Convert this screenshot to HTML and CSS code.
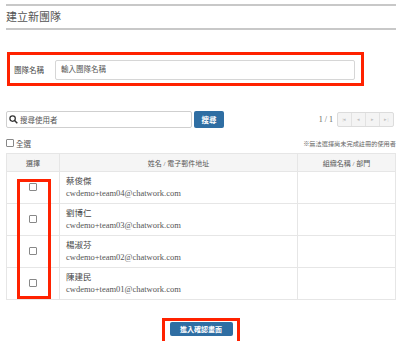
FILE: index.html
```html
<!DOCTYPE html>
<html lang="zh-Hant">
<head>
    <meta charset="UTF-8">
    <title>建立新團隊</title>
    <link rel="stylesheet" href="styles.css">
</head>
<body>
    <div class="page">
        <h1 class="title">建立新團隊</h1>

        <div class="team-box">
            <label class="team-label">團隊名稱</label>
            <div class="team-input">輸入團隊名稱</div>
        </div>

        <div class="search-row">
            <div class="search-input">
                <svg class="search-icon" width="9" height="9" viewBox="0 0 10 10">
                    <circle cx="4" cy="4" r="3" fill="none" stroke="#333" stroke-width="1.4"/>
                    <line x1="6.2" y1="6.2" x2="9.2" y2="9.2" stroke="#333" stroke-width="1.6"/>
                </svg>
                <span>搜尋使用者</span>
            </div>
            <button class="search-btn">搜尋</button>
            <div class="pager">
                <span class="pager-count">1 / 1</span>
                <div class="pager-btns">
                    <span class="pager-btn">|◂</span>
                    <span class="pager-btn">◂</span>
                    <span class="pager-btn">▸</span>
                    <span class="pager-btn">▸|</span>
                </div>
            </div>
        </div>

        <div class="select-row">
            <span class="check-all"><span class="box"></span>全選</span>
            <span class="note">※無法選擇尚未完成註冊的使用者</span>
        </div>

        <div class="table-wrap">
            <div class="pick-frame"></div>
            <table class="users">
                <thead>
                    <tr>
                        <th class="col-pick">選擇</th>
                        <th class="col-name">姓名 / 電子郵件地址</th>
                        <th class="col-org">組織名稱 / 部門</th>
                    </tr>
                </thead>
                <tbody>
                    <tr>
                        <td class="col-pick"><span class="box"></span></td>
                        <td class="col-name"><div class="name">蔡俊傑</div><div class="email">cwdemo+team04@chatwork.com</div></td>
                        <td></td>
                    </tr>
                    <tr>
                        <td class="col-pick"><span class="box"></span></td>
                        <td class="col-name"><div class="name">劉博仁</div><div class="email">cwdemo+team03@chatwork.com</div></td>
                        <td></td>
                    </tr>
                    <tr>
                        <td class="col-pick"><span class="box"></span></td>
                        <td class="col-name"><div class="name">楊淑芬</div><div class="email">cwdemo+team02@chatwork.com</div></td>
                        <td></td>
                    </tr>
                    <tr>
                        <td class="col-pick"><span class="box"></span></td>
                        <td class="col-name"><div class="name">陳建民</div><div class="email">cwdemo+team01@chatwork.com</div></td>
                        <td></td>
                    </tr>
                </tbody>
            </table>
        </div>

        <div class="actions">
            <div class="action-frame">
                <button class="confirm-btn">進入確認畫面</button>
            </div>
        </div>
    </div>
</body>
</html>
```

FILE: styles.css
```css
body {
    margin: 0;
    background: #ffffff;
    font-family: "Liberation Serif", "Noto Sans CJK TC", serif;
    color: #333;
}
.page {
    width: 390px;
    padding: 4px 0 0 6px;
}
.title {
    margin: 0;
    height: 22px;
    line-height: 22px;
    font-size: 11px;
    font-weight: normal;
    color: #555;
    border-top: 2px solid #c8c8c8;
    border-bottom: 2px solid #c8c8c8;
}
.team-box {
    margin: 22px 0 0 1px;
    width: 351px;
    height: 28px;
    border: 3px solid #ff2200;
    display: flex;
    align-items: center;
}
.team-label {
    width: 41px;
    padding-left: 4px;
    font-size: 7.5px;
    color: #444;
}
.team-input {
    width: 293px;
    height: 18px;
    margin-top: 2px;
    border: 1px solid #d6d6d6;
    border-radius: 2px;
    font-size: 7.5px;
    color: #555;
    line-height: 18px;
    padding-left: 5px;
}
.search-row {
    margin-top: 25px;
    display: flex;
    align-items: center;
    height: 17px;
}
.search-input {
    width: 182px;
    height: 15px;
    border: 1px solid #cfcfcf;
    border-radius: 2px;
    display: flex;
    align-items: center;
    gap: 2px;
    padding-left: 2px;
    font-size: 7.5px;
    color: #555;
}
.search-icon {
    display: block;
}
.search-btn {
    margin-left: 2px;
    width: 30px;
    height: 17px;
    padding: 0;
    border: none;
    border-radius: 2px;
    background: #2f6ea3;
    color: #fff;
    font-family: inherit;
    font-size: 7.5px;
    font-weight: bold;
}
.pager {
    margin-left: auto;
    display: flex;
    align-items: center;
    gap: 4px;
}
.pager-count {
    font-size: 8px;
    color: #666;
}
.pager-btns {
    display: flex;
    height: 13px;
    border: 1px solid #dcdcdc;
    border-radius: 2px;
    background: #f4f4f4;
    margin-right: 2px;
}
.pager-btn {
    width: 13px;
    font-size: 5px;
    color: #c0c0c0;
    text-align: center;
    line-height: 13px;
    border-left: 1px solid #e2e2e2;
}
.pager-btn:first-child {
    border-left: none;
}
.select-row {
    margin-top: 9px;
    display: flex;
    align-items: center;
    justify-content: space-between;
    height: 12px;
    font-size: 7.5px;
    color: #555;
}
.check-all {
    display: flex;
    align-items: center;
    gap: 2px;
}
.note {
    font-size: 6.2px;
    color: #666;
}
.box {
    display: inline-block;
    width: 6px;
    height: 6px;
    border: 1px solid #888;
    border-radius: 1px;
    background: #fff;
}
.table-wrap {
    position: relative;
    margin-top: 4px;
}
.users {
    width: 390px;
    table-layout: fixed;
    border-collapse: collapse;
    font-size: 7px;
}
.users th,
.users td {
    border: 1px solid #e6e6e6;
    padding: 0;
}
.users th {
    height: 17px;
    background: #f5f5f5;
    font-weight: normal;
    color: #555;
}
.users td {
    height: 31px;
}
.col-pick {
    width: 52px;
    text-align: center;
}
.col-name {
    width: 237px;
}
td.col-name {
    padding-left: 6px;
}
.name {
    font-size: 8.5px;
    color: #444;
    line-height: 11px;
}
.email {
    font-size: 8.5px;
    color: #555;
    line-height: 12px;
}
.pick-frame {
    position: absolute;
    left: 11px;
    top: 26px;
    width: 28px;
    height: 114px;
    border: 3px solid #ff2200;
}
.actions {
    margin-top: 18px;
    display: flex;
    justify-content: center;
}
.action-frame {
    width: 72px;
    height: 28px;
    border: 3px solid #ff2200;
    border-bottom: none;
    display: flex;
    justify-content: center;
    padding-top: 1px;
}
.confirm-btn {
    width: 63px;
    height: 14px;
    padding: 0;
    border: none;
    border-radius: 2px;
    background: #2f6ea3;
    color: #fff;
    font-family: inherit;
    font-size: 7px;
    font-weight: bold;
}
```
